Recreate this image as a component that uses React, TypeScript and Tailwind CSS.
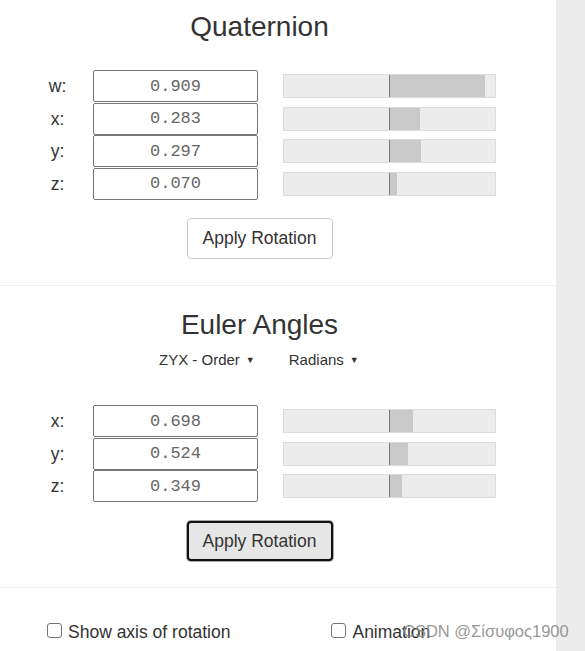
import React from 'react';

type Row = { label: string; value: number; scale: number };

const QUAT_ROWS: Row[] = [
  { label: 'w', value: 0.909, scale: 1 },
  { label: 'x', value: 0.283, scale: 1 },
  { label: 'y', value: 0.297, scale: 1 },
  { label: 'z', value: 0.07, scale: 1 },
];

const EULER_ROWS: Row[] = [
  { label: 'x', value: 0.698, scale: Math.PI },
  { label: 'y', value: 0.524, scale: Math.PI },
  { label: 'z', value: 0.349, scale: Math.PI },
];

function ValueRow({ row }: { row: Row }) {
  const frac = Math.min(1, Math.abs(row.value) / row.scale);
  return (
    <div className="flex items-center h-[32.5px]">
      <div className="ml-[30px] w-[55px] text-center text-[17.5px] text-[#333]">{row.label}:</div>
      <input
        readOnly
        value={row.value.toFixed(3)}
        className="ml-[8px] w-[165px] h-[32px] border border-[#767676] rounded-[2px] bg-white text-center text-[17px] text-[#666] outline-none"
        style={{ fontFamily: '"Liberation Mono", "Courier New", monospace' }}
      />
      <div className="ml-[25px] w-[213px] h-[24px] border border-[#dcdcdc] bg-[#ececec] flex">
        <div className="w-[105px] h-full" />
        <div className="flex-1 h-full border-l border-[#777] flex">
          <div className="h-full bg-[#c9c9c9]" style={{ width: `${frac * 100}%` }} />
        </div>
      </div>
    </div>
  );
}

function Checkbox({ label }: { label: string }) {
  return (
    <label className="flex items-start gap-[6px] text-[17.5px] leading-[20px] text-[#333]">
      <span className="mt-[1px] w-[15px] h-[15px] border border-[#767676] rounded-[3px] bg-white" />
      <span>{label}</span>
    </label>
  );
}

export default function App() {
  return (
    <div
      className="relative flex h-[651px] w-[585px] bg-white overflow-hidden"
      style={{ fontFamily: '"Liberation Sans", Arial, sans-serif' }}
    >
      <div className="w-[556px] flex flex-col">
        {/* Quaternion */}
        <div className="pt-[11px] pb-[26px] border-b border-[#eee]">
          <div className="w-[519px]">
            <h1 className="text-center text-[28px] leading-[32px] text-[#333]">Quaternion</h1>
            <div className="mt-[27px] flex flex-col">
              {QUAT_ROWS.map((r) => (
                <ValueRow key={r.label} row={r} />
              ))}
            </div>
            <button className="mt-[18px] mx-auto block w-[146px] h-[41px] border border-[#ccc] rounded-[4px] bg-white text-[17.5px] text-[#333]">
              Apply Rotation
            </button>
          </div>
        </div>

        {/* Euler Angles */}
        <div className="pt-[23px] pb-[26px] border-b border-[#eee]">
          <div className="w-[519px]">
            <h1 className="text-center text-[28px] leading-[32px] text-[#333]">Euler Angles</h1>
            <div className="mt-[9px] pl-[159px] flex items-center gap-[34px] text-[15px] leading-[20px] text-[#333]">
              <span className="flex items-center gap-[6px]">
                ZYX - Order <span className="text-[9px]">▼</span>
              </span>
              <span className="flex items-center gap-[6px]">
                Radians <span className="text-[9px]">▼</span>
              </span>
            </div>
            <div className="mt-[35px] flex flex-col">
              {EULER_ROWS.map((r) => (
                <ValueRow key={r.label} row={r} />
              ))}
            </div>
            <button className="mt-[18.5px] mx-auto block w-[146px] h-[40px] border-2 border-[#111] rounded-[4px] bg-[#e6e6e6] text-[17.5px] text-[#333] shadow-[0_0_0_1px_#aaa]">
              Apply Rotation
            </button>
          </div>
        </div>

        {/* Options */}
        <div className="pt-[34px] flex">
          <div className="ml-[47px]">
            <Checkbox label="Show axis of rotation" />
          </div>
          <div className="ml-[101px]">
            <Checkbox label="Animation" />
          </div>
        </div>
      </div>
      <div className="flex-1 bg-[#ececec]" />

      {/* watermark */}
      <div className="absolute left-[403px] top-[621px] text-[16.5px] leading-[20px] text-[#8a8a8a]/90">
        CSDN @Σίσυφος1900
      </div>
    </div>
  );
}
